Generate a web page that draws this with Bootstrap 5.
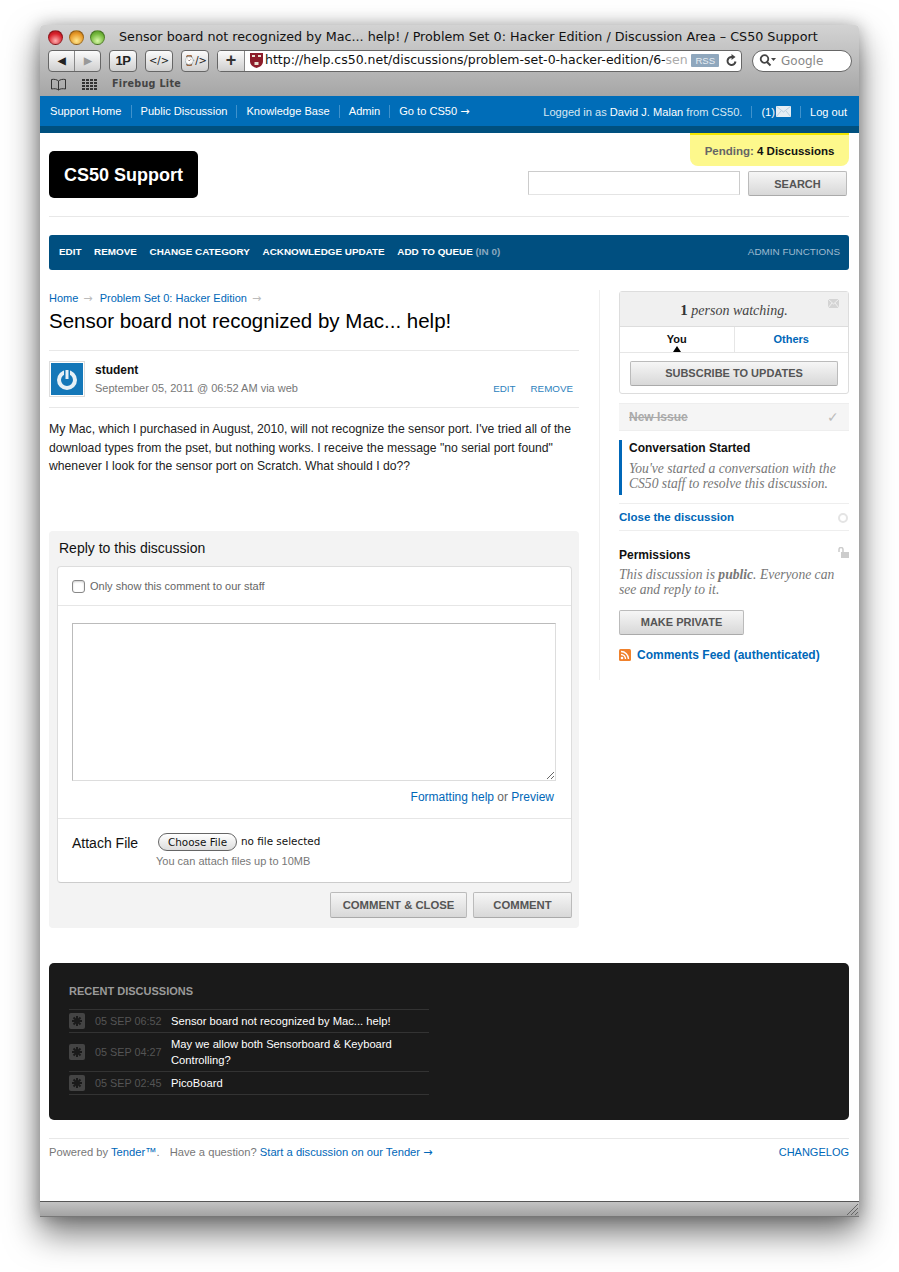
<!DOCTYPE html>
<html lang="en">
<head>
    <meta charset="UTF-8">
    <meta name="viewport" content="width=device-width, initial-scale=1.0">
    <title>Sensor board not recognized by Mac... help! - CS50 Support</title>
    <link href="https://cdn.jsdelivr.net/npm/bootstrap@5.3.0/dist/css/bootstrap.min.css" rel="stylesheet">
    <style>
        html, body { height: 1272px; overflow: hidden; }
        body {
            background: #fff;
            font-family: "Liberation Sans", Arial, sans-serif;
            font-size: 12px;
            color: #333;
            padding: 25px 0 0 40px;
        }
        a { color: #0067b8; text-decoration: none; }
        .arw { font-family: "DejaVu Sans", sans-serif; }
        .mac-window {
            width: 819px;
            height: 1192px;
            display: flex;
            flex-direction: column;
            border-radius: 4px 4px 0 0;
            box-shadow: 0 16px 34px rgba(0,0,0,.55), 0 0 16px rgba(0,0,0,.25);
        }
        .mac-chrome {
            height: 71px;
            background: linear-gradient(#d3d3d3, #a6a6a6);
            border-radius: 4px 4px 0 0;
            flex: none;
        }
        .mac-title { height: 23px; padding: 1px 8px 0 8px; }
        .mac-dot { width: 15px; height: 15px; border-radius: 50%; margin-right: 6px; flex: none; border: 1px solid rgba(0,0,0,.3); }
        .dot-red { background: radial-gradient(circle at 50% 75%, #ffb0b0, #d8222c 60%, #a01018); }
        .dot-amber { background: radial-gradient(circle at 50% 75%, #ffe890, #e89a28 60%, #a86410); }
        .dot-green { background: radial-gradient(circle at 50% 75%, #d8f8a8, #74b83c 60%, #4a8a20); }
        .mac-title-text {
            font-family: "DejaVu Sans", sans-serif;
            font-size: 12.73px;
            color: #111;
            margin-left: 8px;
            white-space: nowrap;
        }
        .mac-toolbar { height: 25px; padding: 0 8px; }
        .mac-btn {
            height: 22px;
            width: 28px;
            background: linear-gradient(#fbfbfb, #cfcfcf);
            border: 1px solid #666;
            border-radius: 4px;
            font-size: 13px;
            font-weight: 700;
            letter-spacing: -.5px;
            color: #222;
            margin-right: 8px;
            flex: none;
            display: flex;
            align-items: center;
            justify-content: center;
        }
        .mac-btn-wide { font-weight: 400; font-family: "DejaVu Sans", sans-serif; font-size: 10px; letter-spacing: 0; }
        .mac-nav-pair { width: 53px; padding: 0; }
        .mac-nav-pair span { flex: 1; text-align: center; font-size: 10px; line-height: 20px; }
        .mac-nav-pair span + span { border-left: 1px solid #888; color: #999; }
        .mac-url {
            width: 525px;
            height: 22px;
            background: #fff;
            border: 1px solid #666;
            border-radius: 4px;
            display: flex;
            align-items: center;
            overflow: hidden;
            flex: none;
        }
        .mac-plus {
            width: 27px;
            height: 100%;
            background: linear-gradient(#fbfbfb, #cfcfcf);
            border-right: 1px solid #888;
            text-align: center;
            font-weight: 700;
            font-size: 18px;
            line-height: 19px;
            flex: none;
        }
        .mac-url-text {
            font-family: "DejaVu Sans", sans-serif;
            font-size: 12.5px;
            color: #111;
            white-space: nowrap;
            flex: 1;
            margin-left: 1px;
        }
        .mac-url-text em { font-style: normal; color: #aaa; }
        .mac-rss {
            background: #8fa7bd;
            color: #e8eef3;
            font-size: 9.5px;
            padding: 0 4px;
            line-height: 13px;
            margin: 0 6px 0 2px;
            flex: none;
            border-radius: 1px;
        }
        .mac-reload { margin-right: 3px; flex: none; }
        .mac-search {
            width: 100px;
            height: 22px;
            margin-left: 10px;
            background: #fff;
            border: 1px solid #666;
            border-radius: 11px;
            font-family: "DejaVu Sans", sans-serif;
            font-size: 12px;
            color: #888;
            padding-left: 6px;
            flex: none;
        }
        .mac-bookmarks { height: 23px; padding: 0 10px; gap: 15px; }
        .mac-bookmarks span {
            font-family: "DejaVu Sans", sans-serif;
            font-size: 9.6px;
            font-weight: 700;
            color: #444;
            letter-spacing: .3px;
            margin-left: -1px;
        }
        .page-area { background: #fff; flex: 1; padding: 0 10px 0 9px; min-height: 0; }
        .top-bar {
            height: 37px;
            background: #006db8;
            border-bottom: 7px solid #00507f;
            margin: 0 -10px 0 -9px;
            padding: 1px 12px 0 10px;
            font-size: 11.1px;
            color: #d8e8f3;
            display: flex;
            justify-content: space-between;
            align-items: center;
        }
        .top-bar a { color: #fff; }
        .top-sep + .top-sep { border-left: 1px solid #3f92cc; margin-left: 9px; padding-left: 9px; }
        .top-sep { line-height: 12px; white-space: nowrap; }
        .top-mail { margin-left: 1px; }
        .header-row { height: 83px; }
        .logo-box {
            width: 149px;
            height: 47px;
            margin-top: 18px;
            background: #000;
            color: #fff;
            border-radius: 5px;
            font-size: 18px;
            font-weight: 700;
            line-height: 48px;
            text-align: center;
        }
        .pending-tab {
            width: 159px;
            height: 33px;
            background: #fdf88c;
            border-top: 2px solid #f2e600;
            border-radius: 0 0 8px 8px;
            font-size: 11.5px;
            font-weight: 700;
            color: #111;
            line-height: 32px;
            text-align: center;
        }
        .pending-tab span { color: #666; }
        .search-row { margin-top: 5px; }
        .search-input { width: 212px; height: 24px; border: 1px solid #ccc; border-bottom-color: #e4e4e4; background: #fff; }
        .grey-btn {
            background: linear-gradient(#f6f6f6, #d8d8d8);
            border: 1px solid #bbb;
            border-bottom-color: #aaa;
            border-radius: 2px;
            font-size: 11px;
            font-weight: 700;
            color: #555;
            text-align: center;
            padding: 0;
            height: 25px;
            display: block;
        }
        .search-btn { width: 99px; margin: 0 2px 0 8px; padding-top: 2px; }
        .soft-line { border-top: 1px solid #e8e8e8; }
        .admin-bar {
            height: 35px;
            margin-top: 18px;
            background: #004f80;
            border-radius: 3px;
            padding: 0 9px 0 10px;
            font-size: 9.9px;
            font-weight: 700;
            color: #fff;
            gap: 12.6px;
        }
        .admin-bar em { font-style: normal; color: #89a8bf; }
        .admin-label { font-weight: 400; color: #9fbbd0; margin-left: auto; }
        .main-col { width: 530px; flex: none; padding-top: 21px; }
        .side-col {
            width: 250px;
            flex: none;
            margin: 20px 0 0 20px;
            padding: 1px 0 0 19px;
            border-left: 1px solid #eee;
            height: 390px;
        }
        .crumbs { font-size: 11px; line-height: 14px; color: #bbb; }
        .crumbs i { font-style: normal; margin: 0 4px 0 5px; }
        .page-title { font-size: 20.5px; font-weight: 400; color: #000; line-height: 24px; margin: 3px 0 17px; }
        .post-head { height: 58px; padding-top: 10px; border-top: 1px solid #e8e8e8; border-bottom: 1px solid #e8e8e8; }
        .avatar-frame { width: 36px; height: 36px; border: 1px solid #ddd; padding: 1px; margin-right: 10px; flex: none; }
        .post-author { font-weight: 700; color: #111; font-size: 12px; line-height: 17px; padding-top: 1px; }
        .post-date { font-size: 11px; color: #777; line-height: 17px; margin-top: 1px; }
        .post-tools { margin-left: auto; font-size: 9.8px; padding: 21px 6px 0 0; gap: 15px; }
        .post-tools a { color: #2d82bd; }
        .post-body { font-size: 12.2px; line-height: 18.5px; color: #222; margin: 12px 0 0; height: 111px; }
        .reply-panel { background: #f3f3f3; border-radius: 4px; padding: 8px 7px 9px 8px; height: 397px; }
        .reply-title { font-size: 14px; color: #111; line-height: 18px; margin: 0 0 9px 2px; }
        .reply-box { background: #fff; border: 1px solid #ddd; border-bottom-color: #ccc; border-radius: 4px; height: 317px; }
        .staff-row { height: 39px; padding-left: 13px; border-bottom: 1px solid #e6e6e6; color: #666; font-size: 11px; }
        .staff-row .form-check-input { width: 13px; height: 13px; margin: 0 5px 0 1px; border-color: #888; border-radius: 3px; box-shadow: inset 0 1px 2px rgba(0,0,0,.2); }
        .text-zone { padding: 17px 15px 0 14px; height: 213px; border-bottom: 1px solid #e6e6e6; }
        .reply-text { display: block; width: 484px; height: 158px; border: 1px solid #bbb; border-bottom-color: #ddd; border-right-color: #ddd; background: #fff; }
        .format-links { text-align: right; font-size: 12px; line-height: 16px; color: #666; margin: 8px 2px 0 0; }
        .attach-zone { padding: 14px 14px 0; }
        .attach-label { width: 84px; font-size: 14px; color: #111; line-height: 18px; padding-top: 1px; flex: none; }
        .file-btn {
            font-family: "DejaVu Sans", sans-serif;
            font-size: 10.4px;
            color: #111;
            background: linear-gradient(#fff, #ddd);
            border: 1px solid #666;
            border-radius: 9px;
            height: 18px;
            width: 79px;
            padding: 0;
            line-height: 15px;
            margin-left: 2px;
        }
        .file-name { font-family: "DejaVu Sans", sans-serif; font-size: 10.4px; color: #111; margin-left: 4px; }
        .file-hint { font-size: 11px; color: #777; line-height: 14px; margin-top: 3px; }
        .reply-actions { gap: 6px; margin-top: 9px; }
        .reply-actions .grey-btn { height: 26px; font-size: 11.3px; }
        .comment-close { width: 137px; }
        .comment-only { width: 99px; }
        .recent-panel {
            height: 157px;
            margin-top: 35px;
            background: #1a1a1a;
            border-radius: 5px;
            padding: 21px 20px 0;
        }
        .recent-title { font-size: 11px; font-weight: 700; color: #9a9a9a; line-height: 14px; margin-bottom: 11px; }
        .recent-list { width: 360px; border-top: 1px solid #333; }
        .recent-item { border-bottom: 1px solid #333; padding: 3px 0; }
        .recent-star { width: 16px; height: 16px; background: #444; border-radius: 2px; flex: none; margin-right: 10px; }
        .recent-date { width: 76px; flex: none; font-size: 10.8px; color: #555; white-space: nowrap; }
        .recent-text { font-size: 11.2px; color: #fff; line-height: 16px; }
        .foot-row { height: 29px; margin-top: 18px; border-top: 1px solid #e8e8e8; font-size: 11.2px; color: #777; padding-top: 5px; }
        .foot-row b { font-weight: 400; margin-left: 7px; }
        .foot-log { font-size: 11px; }
        .mac-status {
            height: 16px;
            flex: none;
            background: linear-gradient(#c3c3c3, #a3a3a3);
            border-top: 1px solid #555;
            border-bottom: 1px solid #777;
        }
        .watch-box { border: 1px solid #ddd; border-radius: 3px; height: 103px; position: relative; }
        .watch-head { height: 35px; background: #f0f0f0; border-bottom: 1px solid #ddd; text-align: center; font-family: "Liberation Serif", serif; font-style: italic; font-size: 14px; line-height: 36px; color: #444; }
        .watch-head b { font-style: normal; font-size: 15px; color: #333; }
        .watch-mail { position: absolute; top: 7px; right: 9px; }
        .watch-tabs { height: 26px; border-bottom: 1px solid #e6e6e6; font-size: 11px; font-weight: 700; line-height: 25px; text-align: center; }
        .watch-tabs div { flex: 1; position: relative; }
        .watch-tabs div + div { border-left: 1px solid #e6e6e6; }
        .tab-active { color: #111; }
        .tab-active::after { content: ""; position: absolute; left: 50%; bottom: 0; margin-left: -4px; border: 4px solid transparent; border-top: 0; border-bottom: 6px solid #000; }
        .watch-btn { width: 208px; margin: 8px auto 0; }
        .step-done { height: 28px; margin-top: 9px; background: #f5f5f5; border-top: 1px solid #eee; border-bottom: 1px solid #eee; padding: 0 10px; font-size: 12px; font-weight: 700; color: #aaa; }
        .step-tick { font-weight: 400; font-size: 14px; color: #bbb; }
        .step-now { border-left: 3px solid #0067b8; margin-top: 9px; padding-left: 7px; height: 55px; }
        .step-name { font-size: 12px; font-weight: 700; color: #111; line-height: 17px; }
        .step-note { font-family: "Liberation Serif", serif; font-style: italic; font-size: 13.6px; color: #777; line-height: 15px; margin-top: 4px; }
        .step-close { height: 28px; margin-top: 8px; padding-top: 1px; border-top: 1px solid #eee; border-bottom: 1px solid #eee; font-size: 11.5px; font-weight: 700; }
        .close-ring { width: 10px; height: 10px; border: 2px solid #e4e4e4; border-radius: 50%; margin-right: 1px; }
        .perm-block { margin-top: 16px; position: relative; }
        .perm-lock { position: absolute; top: 0; right: 0; }
        .perm-name { font-size: 12px; font-weight: 700; color: #111; line-height: 16px; }
        .perm-note { font-family: "Liberation Serif", serif; font-style: italic; font-size: 13.6px; color: #777; line-height: 15px; margin-top: 4px; }
        .perm-note b { font-weight: 700; }
        .private-btn { width: 125px; margin-top: 13px; }
        .feed-row { margin-top: 11px; font-size: 12px; font-weight: 700; gap: 6px; }
    </style>
</head>
<body>
    <div class="mac-window">
        <div class="mac-chrome">
            <div class="mac-title d-flex align-items-center">
                <div class="mac-dot dot-red"></div>
                <div class="mac-dot dot-amber"></div>
                <div class="mac-dot dot-green"></div>
                <div class="mac-title-text">Sensor board not recognized by Mac... help! / Problem Set 0: Hacker Edition / Discussion Area – CS50 Support</div>
            </div>
            <div class="mac-toolbar d-flex align-items-center">
                <div class="mac-btn mac-nav-pair"><span>◀</span><span>▶</span></div>
                <div class="mac-btn">1P</div>
                <div class="mac-btn mac-btn-wide">&lt;/&gt;</div>
                <div class="mac-btn mac-btn-wide">⌚/&gt;</div>
                <div class="mac-url">
                    <div class="mac-plus">+</div>
                    <svg width="15" height="17" viewBox="0 0 15 17" class="ms-1 flex-none">
                        <path d="M1 1h13v8c0 4-3 6-6.500 7C4 15 1 13 1 9z" fill="#8c1c2a"/>
                        <path d="M3 3h3v2H3zM9 3h3v2H9zM5.500 10h4v3h-4z" fill="#e8e0d0"/>
                    </svg>
                    <div class="mac-url-text">http://help.cs50.net/discussions/problem-set-0-hacker-edition/6-<em>sen</em></div>
                    <div class="mac-rss">RSS</div>
                    <svg width="13" height="13" viewBox="0 0 13 13" class="mac-reload">
                        <path d="M10.500 7.500A4 4 0 1 1 7 3" fill="none" stroke="#444" stroke-width="2"/>
                        <path d="M6.500 0l4 3-4 3z" fill="#444"/>
                    </svg>
                </div>
                <div class="mac-search d-flex align-items-center">
                    <svg width="18" height="13" viewBox="0 0 18 13" class="me-1 flex-none">
                        <circle cx="5.500" cy="5" r="3.800" fill="none" stroke="#444" stroke-width="1.800"/>
                        <path d="M8 8l3.500 3.500" stroke="#444" stroke-width="2"/>
                        <path d="M12 4h5l-2.500 3z" fill="#444"/>
                    </svg>Google
                </div>
            </div>
            <div class="mac-bookmarks d-flex align-items-center">
                <svg width="17" height="13" viewBox="0 0 17 13">
                    <path d="M8.500 3C7 1.500 4 1 1.500 1.500V11C4 10.500 7 10.500 8.500 12 10 10.500 13 10.500 15.500 11V1.500C13 1 10 1.500 8.500 3zM8.500 3v9" fill="none" stroke="#333"/>
                </svg>
                <svg width="16" height="12" viewBox="0 0 16 12" fill="#333">
                    <path d="M0 0h3v2H0zM4 0h3v2H4zM8 0h3v2H8zM12 0h3v2h-3zM0 3h3v2H0zM4 3h3v2H4zM8 3h3v2H8zM12 3h3v2h-3zM0 6h3v2H0zM4 6h3v2H4zM8 6h3v2H8zM12 6h3v2h-3zM0 9h3v2H0zM4 9h3v2H4zM8 9h3v2H8zM12 9h3v2h-3z"/>
                </svg>
                <span>Firebug Lite</span>
            </div>
        </div>

        <div class="page-area">
            <div class="top-bar">
                <div class="d-flex">
                    <div class="top-sep"><a href="#">Support Home</a></div>
                    <div class="top-sep"><a href="#">Public Discussion</a></div>
                    <div class="top-sep"><a href="#">Knowledge Base</a></div>
                    <div class="top-sep"><a href="#">Admin</a></div>
                    <div class="top-sep"><a href="#">Go to CS50 <span class="arw">→</span></a></div>
                </div>
                <div class="d-flex align-items-center">
                    <div class="top-sep">Logged in as <a href="#">David J. Malan</a> from CS50.</div>
                    <div class="top-sep d-flex align-items-center"><a href="#">(1)</a>
                        <svg width="15" height="11" viewBox="0 0 15 11" class="top-mail">
                            <rect width="15" height="11" fill="#e6eef4"/>
                            <path d="M0 0l7.500 6L15 0M0 11l5-6M15 11l-5-6" fill="none" stroke="#a9c2d4" stroke-width=".7"/>
                        </svg>
                    </div>
                    <div class="top-sep"><a href="#">Log out</a></div>
                </div>
            </div>

            <div class="header-row d-flex justify-content-between">
                <div class="logo-box">CS50 Support</div>
                <div class="d-flex flex-column align-items-end">
                    <div class="pending-tab"><span>Pending:</span> 4 Discussions</div>
                    <div class="d-flex search-row">
                        <div class="search-input"></div>
                        <button class="grey-btn search-btn">SEARCH</button>
                    </div>
                </div>
            </div>
            <div class="soft-line"></div>

            <div class="admin-bar d-flex align-items-center">
                <span>EDIT</span>
                <span>REMOVE</span>
                <span>CHANGE CATEGORY</span>
                <span>ACKNOWLEDGE UPDATE</span>
                <span>ADD TO QUEUE <em>(IN 0)</em></span>
                <span class="admin-label">ADMIN FUNCTIONS</span>
            </div>

            <div class="d-flex">
                <div class="main-col">
                    <div class="crumbs"><a href="#">Home</a><i class="arw">→</i> <a href="#">Problem Set 0: Hacker Edition</a><i class="arw">→</i></div>
                    <h1 class="page-title">Sensor board not recognized by Mac... help!</h1>
                    <div class="post-head d-flex">
                        <div class="avatar-frame">
                            <svg width="32" height="32" viewBox="0 0 32 32" class="d-block">
                                <rect width="32" height="32" fill="#1477b8"/>
                                <circle cx="16" cy="17" r="8" fill="none" stroke="#e6f0f6" stroke-width="4"/>
                                <rect x="13" y="6" width="6" height="10" fill="#1477b8"/>
                                <rect x="14.500" y="7" width="3" height="9" fill="#e6f0f6"/>
                            </svg>
                        </div>
                        <div>
                            <div class="post-author">student</div>
                            <div class="post-date">September 05, 2011 @ 06:52 AM via web</div>
                        </div>
                        <div class="post-tools d-flex"><a href="#">EDIT</a><a href="#">REMOVE</a></div>
                    </div>
                    <p class="post-body">My Mac, which I purchased in August, 2010, will not recognize the sensor port. I've tried all of the download types from the pset, but nothing works. I receive the message "no serial port found" whenever I look for the sensor port on Scratch. What should I do??</p>

                    <div class="reply-panel">
                        <div class="reply-title">Reply to this discussion</div>
                        <div class="reply-box">
                            <div class="staff-row d-flex align-items-center">
                                <input class="form-check-input" type="checkbox" id="staffOnly">
                                <label for="staffOnly">Only show this comment to our staff</label>
                            </div>
                            <div class="text-zone">
                                <textarea class="reply-text"></textarea>
                                <div class="format-links"><a href="#">Formatting help</a> or <a href="#">Preview</a></div>
                            </div>
                            <div class="attach-zone d-flex">
                                <div class="attach-label">Attach File</div>
                                <div>
                                    <div class="d-flex align-items-center">
                                        <button class="file-btn">Choose File</button>
                                        <span class="file-name">no file selected</span>
                                    </div>
                                    <div class="file-hint">You can attach files up to 10MB</div>
                                </div>
                            </div>
                        </div>
                        <div class="reply-actions d-flex justify-content-end">
                            <button class="grey-btn comment-close">COMMENT &amp; CLOSE</button>
                            <button class="grey-btn comment-only">COMMENT</button>
                        </div>
                    </div>
                </div>

                <div class="side-col">
                    <div class="watch-box">
                        <div class="watch-head"><b>1</b> person watching.</div>
                        <svg class="watch-mail" width="11" height="9" viewBox="0 0 11 9">
                            <rect width="11" height="9" fill="#d4d4d4"/>
                            <path d="M0 0l5.500 5L11 0M0 9l4-5M11 9L7 4" fill="none" stroke="#f0f0f0"/>
                        </svg>
                        <div class="watch-tabs d-flex">
                            <div class="tab-active">You</div>
                            <div><a href="#">Others</a></div>
                        </div>
                        <button class="grey-btn watch-btn">SUBSCRIBE TO UPDATES</button>
                    </div>
                    <div class="step-done d-flex align-items-center justify-content-between">
                        <s>New Issue</s><span class="step-tick">✓</span>
                    </div>
                    <div class="step-now">
                        <div class="step-name">Conversation Started</div>
                        <div class="step-note">You've started a conversation with the CS50 staff to resolve this discussion.</div>
                    </div>
                    <div class="step-close d-flex align-items-center justify-content-between">
                        <a href="#">Close the discussion</a><div class="close-ring"></div>
                    </div>
                    <div class="perm-block">
                        <svg class="perm-lock" width="11" height="11" viewBox="0 0 11 11">
                            <path d="M1 5V2.500a2 2 0 0 1 4 0V5" fill="none" stroke="#ccc" stroke-width="1.500"/>
                            <rect x="3" y="5" width="8" height="6" fill="#ccc"/>
                        </svg>
                        <div class="perm-name">Permissions</div>
                        <div class="perm-note">This discussion is <b>public</b>. Everyone can<br>see and reply to it.</div>
                        <button class="grey-btn private-btn">MAKE PRIVATE</button>
                        <div class="feed-row d-flex align-items-center">
                            <svg width="12" height="12" viewBox="0 0 12 12">
                                <rect width="12" height="12" rx="1.500" fill="#f0812c"/>
                                <circle cx="3" cy="9" r="1.300" fill="#fff"/>
                                <path d="M2 5.500A4.500 4.500 0 0 1 6.500 10M2 2.500A7.500 7.500 0 0 1 9.500 10" fill="none" stroke="#fff" stroke-width="1.400"/>
                            </svg>
                            <a href="#">Comments Feed (authenticated)</a>
                        </div>
                    </div>
                </div>
            </div>

            <div class="recent-panel">
                <div class="recent-title">RECENT DISCUSSIONS</div>
                <div class="recent-list">
                    <div class="recent-item d-flex align-items-center">
                        <svg class="recent-star" viewBox="0 0 16 16"><path d="M8 3v10M3 8h10M4.500 4.500l7 7M11.500 4.500l-7 7" stroke="#1a1a1a" stroke-width="2"/></svg>
                        <div class="recent-date">05 SEP 06:52</div>
                        <div class="recent-text">Sensor board not recognized by Mac... help!</div>
                    </div>
                    <div class="recent-item d-flex align-items-center">
                        <svg class="recent-star" viewBox="0 0 16 16"><path d="M8 3v10M3 8h10M4.500 4.500l7 7M11.500 4.500l-7 7" stroke="#1a1a1a" stroke-width="2"/></svg>
                        <div class="recent-date">05 SEP 04:27</div>
                        <div class="recent-text">May we allow both Sensorboard &amp; Keyboard Controlling?</div>
                    </div>
                    <div class="recent-item d-flex align-items-center">
                        <svg class="recent-star" viewBox="0 0 16 16"><path d="M8 3v10M3 8h10M4.500 4.500l7 7M11.500 4.500l-7 7" stroke="#1a1a1a" stroke-width="2"/></svg>
                        <div class="recent-date">05 SEP 02:45</div>
                        <div class="recent-text">PicoBoard</div>
                    </div>
                </div>
            </div>

            <div class="foot-row d-flex justify-content-between">
                <div>Powered by <a href="#">Tender™</a>. <b>Have a question?</b> <a href="#">Start a discussion on our Tender <span class="arw">→</span></a></div>
                <a href="#" class="foot-log">CHANGELOG</a>
            </div>
        </div>

        <div class="mac-status d-flex justify-content-end">
            <svg width="14" height="14" viewBox="0 0 14 14">
                <path d="M13 2L2 13M13 6l-7 7M13 10l-3 3" stroke="#666" fill="none"/>
            </svg>
        </div>
    </div>
</body>
</html>
